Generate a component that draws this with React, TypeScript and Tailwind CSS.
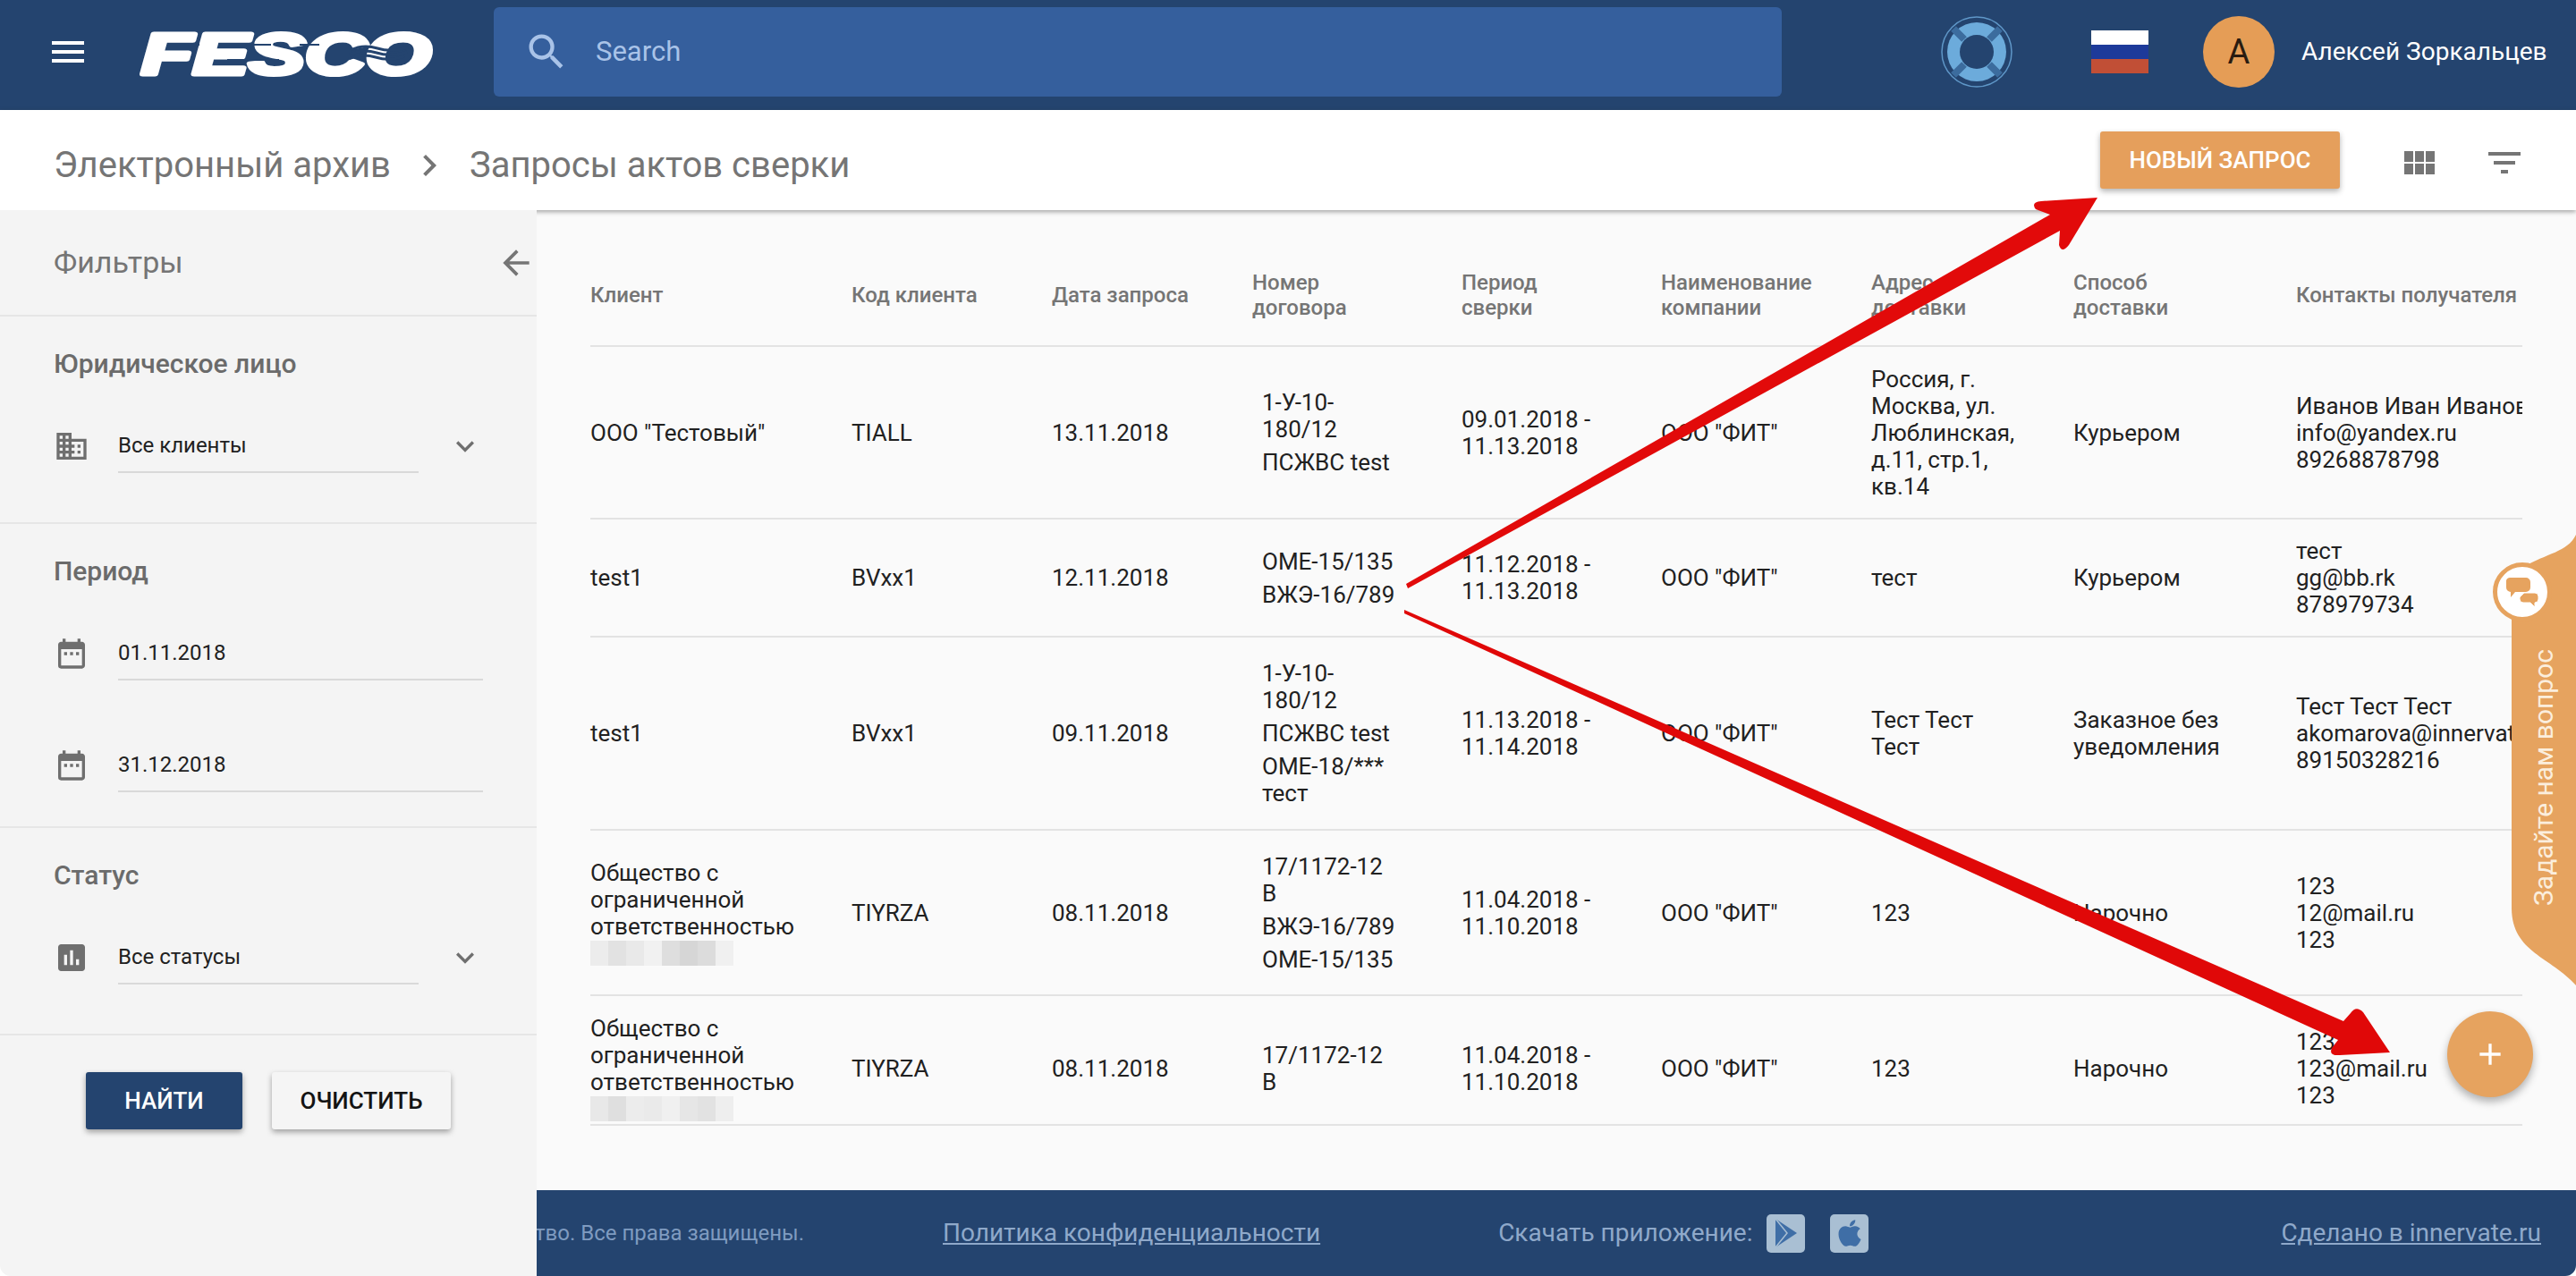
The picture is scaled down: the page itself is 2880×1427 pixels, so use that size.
import { FaApple } from 'react-icons/fa';
import {
  MdAdd,
  MdArrowBack,
  MdAssessment,
  MdChevronRight,
  MdDateRange,
  MdDomain,
  MdFilterList,
  MdKeyboardArrowDown,
  MdMenu,
  MdSearch,
} from 'react-icons/md';

const columns = 'grid grid-cols-[292px_224px_224px_234px_223px_235px_226px_249px_253px] items-center';

const headers = [
  'Клиент',
  'Код клиента',
  'Дата запроса',
  'Номер\nдоговора',
  'Период\nсверки',
  'Наименование\nкомпании',
  'Адрес\nдоставки',
  'Способ\nдоставки',
  'Контакты получателя',
];

const rows = [
  {
    height: 'h-[193px]',
    client: 'ООО "Тестовый"',
    code: 'TIALL',
    date: '13.11.2018',
    contracts: ['1-У-10-\n180/12', 'ПСЖВС test'],
    period: '09.01.2018 -\n11.13.2018',
    address: 'Россия, г.\nМосква, ул.\nЛюблинская,\nд.11, стр.1,\nкв.14',
    method: 'Курьером',
    contacts: 'Иванов Иван Иванович\ninfo@yandex.ru\n89268878798',
  },
  {
    height: 'h-[132px]',
    client: 'test1',
    code: 'BVxx1',
    date: '12.11.2018',
    contracts: ['ОМЕ-15/135', 'ВЖЭ-16/789'],
    period: '11.12.2018 -\n11.13.2018',
    address: 'тест',
    method: 'Курьером',
    contacts: 'тест\ngg@bb.rk\n878979734',
  },
  {
    height: 'h-[216px]',
    client: 'test1',
    code: 'BVxx1',
    date: '09.11.2018',
    contracts: ['1-У-10-\n180/12', 'ПСЖВС test', 'ОМЕ-18/***\nтест'],
    period: '11.13.2018 -\n11.14.2018',
    address: 'Тест Тест\nТест',
    method: 'Заказное без\nуведомления',
    contacts: 'Тест Тест Тест\nakomarova@innervate.ru\n89150328216',
  },
  {
    height: 'h-[185px]',
    client: 'Общество с\nограниченной\nответственностью',
    blur: ['#ececec', '#e2e2e2', '#e9e9e9', '#f1f1f1', '#dedede', '#d6d6d6', '#dcdcdc', '#f0f0f0'],
    code: 'TIYRZA',
    date: '08.11.2018',
    contracts: ['17/1172-12\nВ', 'ВЖЭ-16/789', 'ОМЕ-15/135'],
    period: '11.04.2018 -\n11.10.2018',
    address: '123',
    method: 'Нарочно',
    contacts: '123\n12@mail.ru\n123',
  },
  {
    height: 'h-[145px] pt-[18px]',
    client: 'Общество с\nограниченной\nответственностью',
    blur: ['#e8e8e8', '#dfdfdf', '#ececec', '#eaeaea', '#f0f0f0', '#e6e6e6', '#e2e2e2', '#eeeeee'],
    code: 'TIYRZA',
    date: '08.11.2018',
    contracts: ['17/1172-12\nВ'],
    period: '11.04.2018 -\n11.10.2018',
    address: '123',
    method: 'Нарочно',
    contacts: '123\n123@mail.ru\n123',
  },
];

function FescoLogo() {
  return (
    <svg width="333" height="80" viewBox="0 0 333 80" className="ml-[55px] shrink-0">
      <text
        x="3"
        y="65"
        textLength="324"
        lengthAdjust="spacingAndGlyphs"
        fill="#fff"
        stroke="#fff"
        strokeWidth="5"
        strokeLinejoin="round"
        fontFamily="'Liberation Sans', sans-serif"
        fontWeight="700"
        fontStyle="italic"
        fontSize="64"
      >
        FESCO
      </text>
      <g stroke="#24446f" fill="none">
        <path d="M49 32h19M110 32h38M99 49h58M180 32h22" strokeWidth="2" />
        <path d="M237 38q14-7 30-2t34-1M236 43q14-7 30-2t34-1M235 48q14-7 30-2t32-1" strokeWidth="3" />
      </g>
    </svg>
  );
}

function Lifebuoy() {
  return (
    <svg width="80" height="80" viewBox="0 0 80 80" className="ml-[178px] shrink-0">
      <circle cx="40" cy="40" r="39" fill="none" stroke="#5f97c8" strokeWidth="1.5" />
      <circle cx="40" cy="40" r="33" fill="#6cabdb" />
      <circle cx="40" cy="40" r="19" fill="#24446f" />
      <g stroke="#3c6c9e" strokeWidth="8">
        <path d="M14 14l12 12M66 14L54 26M14 66l12-12M66 66L54 54" />
      </g>
    </svg>
  );
}

function Flag() {
  return (
    <div className="ml-[88px] flex h-[48px] w-[64px] shrink-0 flex-col">
      <div className="h-[16px] bg-white" />
      <div className="h-[16px] bg-[#1d3a9a]" />
      <div className="h-[16px] bg-[#c14f36]" />
    </div>
  );
}

function GridIcon() {
  return (
    <svg width="34" height="26" viewBox="0 0 34 26" fill="#757575" className="ml-[72px] mt-[6px]">
      <rect x="0" y="0" width="10" height="12" />
      <rect x="12" y="0" width="10" height="12" />
      <rect x="24" y="0" width="10" height="12" />
      <rect x="0" y="14" width="10" height="12" />
      <rect x="12" y="14" width="10" height="12" />
      <rect x="24" y="14" width="10" height="12" />
    </svg>
  );
}

function Field({ icon, value, select }: { icon: React.ReactNode; value: string; select?: boolean }) {
  return (
    <div className="ml-[60px] flex items-center">
      <div className="h-[40px] w-[40px] shrink-0 text-[#6f6f6f]">{icon}</div>
      <div
        className={`ml-[32px] flex h-[60px] items-center border-b-2 border-[#d9d9d9] text-[24px] text-[#212121] ${
          select ? 'w-[336px]' : 'w-[408px]'
        }`}
      >
        {value}
      </div>
      {select && <MdKeyboardArrowDown size={40} className="ml-[32px] text-[#6f6f6f]" />}
    </div>
  );
}

function Sidebar() {
  return (
    <aside className="z-10 flex w-[600px] shrink-0 flex-col bg-[#f4f4f4]">
      <div className="flex h-[119px] items-center justify-between border-b-2 border-[#e6e6e6] pl-[60px] pr-[1px]">
        <span className="text-[34px] text-[#757575]">Фильтры</span>
        <MdArrowBack size={44} className="text-[#757575]" />
      </div>
      <section className="h-[232px] border-b-2 border-[#e6e6e6] pt-[33px]">
        <h3 className="ml-[60px] h-[40px] text-[30px] font-medium leading-[40px] text-[#6b6b6b]">Юридическое лицо</h3>
        <div className="mt-[42px]">
          <Field icon={<MdDomain size={40} />} value="Все клиенты" select />
        </div>
      </section>
      <section className="h-[340px] border-b-2 border-[#e6e6e6] pt-[33px]">
        <h3 className="ml-[60px] h-[40px] text-[30px] font-medium leading-[40px] text-[#6b6b6b]">Период</h3>
        <div className="mt-[42px]">
          <Field icon={<MdDateRange size={40} />} value="01.11.2018" />
        </div>
        <div className="mt-[65px]">
          <Field icon={<MdDateRange size={40} />} value="31.12.2018" />
        </div>
      </section>
      <section className="h-[232px] border-b-2 border-[#e6e6e6] pt-[33px]">
        <h3 className="ml-[60px] h-[40px] text-[30px] font-medium leading-[40px] text-[#6b6b6b]">Статус</h3>
        <div className="mt-[42px]">
          <Field icon={<MdAssessment size={40} />} value="Все статусы" select />
        </div>
      </section>
      <div className="flex gap-[33px] pl-[96px] pt-[41px]">
        <button className="h-[64px] w-[175px] rounded-[3px] bg-[#24446f] text-[26px] font-medium text-white shadow-[0_3px_6px_rgba(0,0,0,0.35)]">
          НАЙТИ
        </button>
        <button className="h-[64px] w-[200px] rounded-[3px] bg-[#f5f5f5] text-[26px] font-medium text-[#141414] shadow-[0_3px_6px_rgba(0,0,0,0.35)]">
          ОЧИСТИТЬ
        </button>
      </div>
    </aside>
  );
}

function ContractTable() {
  return (
    <div className="h-[1096px] overflow-hidden bg-[#fafafa] px-[60px]">
      <div className={`${columns} h-[153px] border-b-2 border-[#e3e3e3] pt-[38px] text-[24px] font-medium leading-[28px] text-[#757575]`}>
        {headers.map((h) => (
          <div key={h} className="overflow-hidden whitespace-pre-line">
            {h}
          </div>
        ))}
      </div>
      {rows.map((row, i) => (
        <div key={i} className={`${columns} ${row.height} border-b-2 border-[#e3e3e3] text-[26px] leading-[30px] text-[#212121]`}>
          <div className="whitespace-pre-line">
            {row.client}
            {row.blur && (
              <div className="mt-[1px] grid h-[28px] w-[160px] grid-cols-8">
                {row.blur.map((c, j) => (
                  <div key={j} style={{ backgroundColor: c }} />
                ))}
              </div>
            )}
          </div>
          <div>{row.code}</div>
          <div>{row.date}</div>
          <div className="flex flex-col gap-[7px] pl-[11px]">
            {row.contracts.map((c) => (
              <div key={c} className="whitespace-pre-line">
                {c}
              </div>
            ))}
          </div>
          <div className="whitespace-pre-line">{row.period}</div>
          <div>ООО "ФИТ"</div>
          <div className="whitespace-pre-line">{row.address}</div>
          <div className="whitespace-pre-line">{row.method}</div>
          <div className="overflow-hidden whitespace-pre">{row.contacts}</div>
        </div>
      ))}
    </div>
  );
}

function Footer() {
  return (
    <footer className="flex h-[96px] items-center bg-[#24446f] text-[#8fa9ca]">
      <div className="flex w-[299px] shrink-0 justify-end overflow-hidden whitespace-nowrap text-[24px] text-[#7f9bc0]">
        © 2018 Общество. Все права защищены.
      </div>
      <a className="ml-[155px] text-[28px] underline">Политика конфиденциальности</a>
      <span className="ml-[199px] text-[28px]">Скачать приложение:</span>
      <div className="ml-[16px] flex h-[43px] w-[43px] items-center justify-center rounded-[5px] bg-[#a9bfd3]">
        <svg width="28" height="34" viewBox="0 0 28 34">
          <path d="M2 1l24 16L2 33z" fill="#3f6ea6" />
          <path d="M2 1l13 16L2 33" fill="none" stroke="#a9bfd3" strokeWidth="1.5" />
        </svg>
      </div>
      <div className="ml-[28px] flex h-[43px] w-[43px] items-center justify-center rounded-[5px] bg-[#a9bfd3] text-[#3f6ea6]">
        <FaApple size={34} />
      </div>
      <a className="ml-auto mr-[39px] text-[28px] underline">Сделано в innervate.ru</a>
    </footer>
  );
}

function Arrows() {
  return (
    <svg width="2880" height="1427" viewBox="0 0 2880 1427" className="pointer-events-none absolute inset-0 z-20">
      <path
        d="M1572 653 L2292 240 L2276 234 Q2270 226 2282 225 L2345 221 L2313 274 Q2305 284 2302 274 L2303 258 L1574 658 Z"
        fill="#e20a0a"
      />
      <path
        d="M1570 682 L2620 1142 L2628 1133 Q2634 1124 2642 1132 L2672 1177 L2616 1180 Q2603 1181 2607 1172 L2614 1163 L1570 686 Z"
        fill="#e00808"
      />
    </svg>
  );
}

function QuestionTab() {
  return (
    <>
      <svg width="90" height="520" viewBox="0 0 90 520" className="absolute right-0 top-[590px] z-10">
        <path d="M90 8 C80 28 58 28 30 45 L18 100 L18 425 C18 475 62 480 90 512 Z" fill="#e6a35f" />
      </svg>
      <div className="absolute left-[2787px] top-[629px] z-20 flex h-[66px] w-[66px] items-center justify-center rounded-full border-[5px] border-[#e6a35f] bg-white">
        <svg width="40" height="38" viewBox="0 0 40 38">
          <path d="M6 3h18a5 5 0 0 1 5 5v6a5 5 0 0 1-5 5H12l-5 6v-6a5 5 0 0 1-5-5V8a4 4 0 0 1 4-5z" fill="#e6a35f" />
          <path d="M22 20h12a4 4 0 0 1 4 4v3a4 4 0 0 1-4 4v5l-5-5h-8a4 4 0 0 1-4-4v-2z" fill="#e6a35f" stroke="#fff" strokeWidth="1" />
        </svg>
      </div>
      <div className="absolute left-[2823px] top-[725px] z-20 flex h-[288px] w-[40px] rotate-180 items-center justify-center whitespace-nowrap text-[30px] text-[#fbeedd] [writing-mode:vertical-rl]">
        Задайте нам вопрос
      </div>
      <button className="absolute left-[2736px] top-[1131px] z-20 flex h-[96px] w-[96px] items-center justify-center rounded-full bg-[#e6a35f] text-white shadow-[0_5px_10px_rgba(0,0,0,0.3)]">
        <MdAdd size={40} />
      </button>
    </>
  );
}

export default function App() {
  return (
    <div className="relative h-[1427px] w-[2880px] overflow-hidden rounded-b-[12px] bg-white font-['Roboto',sans-serif]">
      <header className="flex h-[123px] items-center bg-[#24446f] pb-[7px] pl-[52px]">
        <MdMenu size={48} className="shrink-0 text-white" />
        <FescoLogo />
        <div className="ml-[64px] flex h-[100px] w-[1440px] shrink-0 items-center rounded-[6px] bg-[#355f9d] pl-[33px]">
          <MdSearch size={52} className="text-[#a9c3e8]" />
          <span className="ml-[29px] text-[31px] text-[#a9c3e8]">Search</span>
        </div>
        <Lifebuoy />
        <Flag />
        <div className="ml-[61px] flex h-[80px] w-[80px] shrink-0 items-center justify-center rounded-full bg-[#e59d56] text-[38px] text-[#2a1c10]">
          А
        </div>
        <span className="ml-[30px] whitespace-nowrap text-[28px] text-white">Алексей Зоркальцев</span>
      </header>

      <div className="relative z-10 flex h-[112px] items-center bg-white pl-[60px] text-[#757575] shadow-[0_2px_5px_rgba(0,0,0,0.35)]">
        <div className="mt-[12px] flex items-center text-[40px]">
          <span>Электронный архив</span>
          <MdChevronRight size={48} className="ml-[19px]" />
          <span className="ml-[21px]">Запросы актов сверки</span>
        </div>
        <button className="ml-auto h-[64px] w-[268px] rounded-[3px] bg-[#e59f5c] text-[26px] font-medium text-white shadow-[0_3px_6px_rgba(0,0,0,0.3)]">
          НОВЫЙ ЗАПРОС
        </button>
        <GridIcon />
        <MdFilterList size={48} className="ml-[54px] mr-[56px] mt-[6px]" />
      </div>

      <div className="flex h-[1192px]">
        <Sidebar />
        <main className="min-w-0 flex-1">
          <ContractTable />
          <Footer />
        </main>
      </div>

      <QuestionTab />
      <Arrows />
    </div>
  );
}
